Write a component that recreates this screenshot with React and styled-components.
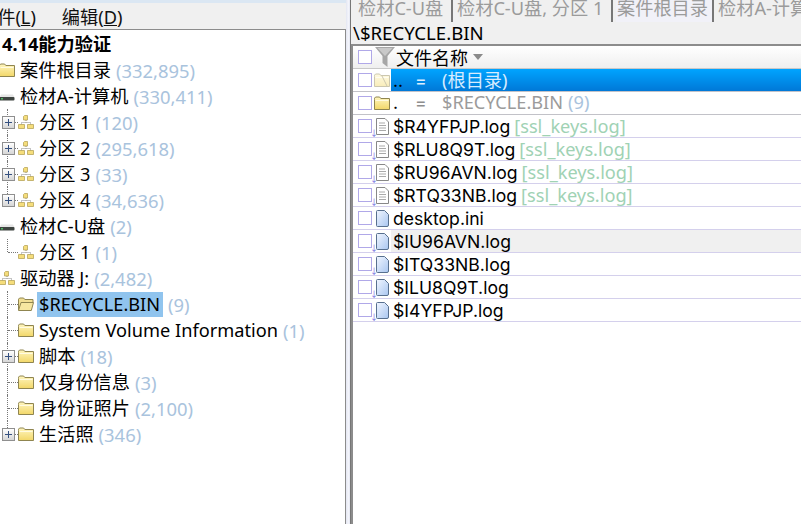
import styled, { createGlobalStyle } from "styled-components";

const GlobalStyle = createGlobalStyle`
  html, body, #root {
    margin: 0;
    height: 100%;
  }
  body {
    overflow: hidden;
    background: #f0f0f0;
    color: #000;
    font-family: "Noto Sans", "Noto Sans CJK SC", sans-serif;
    font-size: 18.2px;
  }
`;

const treeRows = [
  { depth: 0, label: "4.14能力验证", bold: true },
  { depth: 1, label: "案件根目录", count: "(332,895)", icon: "folder" },
  { depth: 1, label: "检材A-计算机", count: "(330,411)", icon: "drive" },
  { depth: 2, label: "分区 1", count: "(120)", icon: "volume", plus: true, guide: "first" },
  { depth: 2, label: "分区 2", count: "(295,618)", icon: "volume", plus: true, guide: "mid" },
  { depth: 2, label: "分区 3", count: "(33)", icon: "volume", plus: true, guide: "mid" },
  { depth: 2, label: "分区 4", count: "(34,636)", icon: "volume", plus: true, guide: "last" },
  { depth: 1, label: "检材C-U盘", count: "(2)", icon: "drive" },
  { depth: 2, label: "分区 1", count: "(1)", icon: "volume", guide: "last" },
  { depth: 1, label: "驱动器 J:", count: "(2,482)", icon: "volume" },
  { depth: 2, label: "$RECYCLE.BIN", count: "(9)", icon: "open", guide: "mid", selected: true },
  { depth: 2, label: "System Volume Information", count: "(1)", icon: "folder", guide: "mid" },
  { depth: 2, label: "脚本", count: "(18)", icon: "folder", plus: true, guide: "mid" },
  { depth: 2, label: "仅身份信息", count: "(3)", icon: "folder", guide: "mid" },
  { depth: 2, label: "身份证照片", count: "(2,100)", icon: "folder", guide: "mid" },
  { depth: 2, label: "生活照", count: "(346)", icon: "folder", plus: true, guide: "last" },
];

const fileRows = [
  { name: "..", alias: "(根目录)", icon: "faded", selected: true, dir: true },
  { name: ".", alias: "$RECYCLE.BIN", count: "(9)", icon: "folder", dir: true, raised: true },
  { name: "$R4YFPJP.log", tag: "[ssl_keys.log]", icon: "text", deleted: true },
  { name: "$RLU8Q9T.log", tag: "[ssl_keys.log]", icon: "text", deleted: true },
  { name: "$RU96AVN.log", tag: "[ssl_keys.log]", icon: "text", deleted: true },
  { name: "$RTQ33NB.log", tag: "[ssl_keys.log]", icon: "text", deleted: true },
  { name: "desktop.ini", icon: "blue" },
  { name: "$IU96AVN.log", icon: "blue", deleted: true, hover: true },
  { name: "$ITQ33NB.log", icon: "blue", deleted: true },
  { name: "$ILU8Q9T.log", icon: "blue", deleted: true },
  { name: "$I4YFPJP.log", icon: "blue", deleted: true },
];

const tabs = [
  { label: "检材C-U盘", width: 96 },
  { label: "检材C-U盘, 分区 1", width: 157 },
  { label: "案件根目录", width: 98, active: true },
  { label: "检材A-计算机", width: 120, open: true },
];

const FolderIcon = ({ faded }) => (
  <svg width="16" height="14" viewBox="0 0 16 14" style={{ opacity: faded ? 0.45 : 1 }}>
    <defs>
      <linearGradient id="folderFill" x1="0" y1="0" x2="0" y2="1">
        <stop offset="0" stopColor="#fff6c0" />
        <stop offset="1" stopColor="#f2d768" />
      </linearGradient>
    </defs>
    <path d="M.5 3.500V2.200L1.600 1h4l1.200 1.500h8.700v11H.5z" fill="url(#folderFill)" stroke="#8f8550" />
    <path d="M1.500 4.500h13" stroke="#fffbe2" />
    {faded && <path d="M8 3l5 10" stroke="#8f8550" />}
  </svg>
);

const OpenFolderIcon = () => (
  <svg width="16" height="14" viewBox="0 0 16 14">
    <path d="M.5 13V2.200L1.600 1h4l1.200 1.500h8.200v3" fill="#f2df93" stroke="#8f8550" />
    <path d="M.5 13.500l2.500-8h12.500l-2.200 8z" fill="#f7e7a0" stroke="#8f8550" />
  </svg>
);

const DriveIcon = () => (
  <svg width="16" height="14" viewBox="0 0 16 14">
    <path d="M2 5.500h12l1.500 3H.5z" fill="#e6e6e6" />
    <rect x="0.500" y="8" width="15" height="3.600" rx="1" fill="#3f4441" />
    <rect x="2" y="9.200" width="2" height="1.200" fill="#56d66d" />
  </svg>
);

const VolumeIcon = () => (
  <svg width="16" height="14" viewBox="0 0 16 14">
    <path d="M8 5v2.500M3.500 9.500V7.500h9v2" fill="none" stroke="#888" strokeDasharray="1 1" />
    <path d="M5.500 1.500L6.500.5h3v4.500h-4z" fill="#f5dd7b" stroke="#b7a55a" strokeWidth=".8" />
    <path d="M.5 9.500h6v4h-6zM9.500 9.500h6v4h-6z" fill="#f5dd7b" stroke="#b7a55a" strokeWidth=".8" />
  </svg>
);

const TextFileIcon = () => (
  <svg width="13" height="17" viewBox="0 0 13 17">
    <path d="M.5.5h8.500l3.500 3.500v12.500H.5z" fill="#fff" stroke="#888" />
    <path d="M3 5h6M3 7.500h7M3 10h7M3 12.500h7" stroke="#aaa" />
  </svg>
);

const BlueFileIcon = () => (
  <svg width="13" height="17" viewBox="0 0 13 17">
    <defs>
      <linearGradient id="blueFill" x1="0" y1="0" x2="1" y2="1">
        <stop offset="0" stopColor="#f1f6ff" />
        <stop offset="1" stopColor="#a9c6f0" />
      </linearGradient>
    </defs>
    <path d="M1.500.5h7l4 4v10.500a1.500 1.500 0 0 1-1.500 1.500h-9.500a1 1 0 0 1-1-1V1.500a1 1 0 0 1 1-1z" fill="url(#blueFill)" stroke="#58708f" />
  </svg>
);

const FunnelIcon = () => (
  <svg width="20" height="22" viewBox="0 0 20 22">
    <path d="M0 1h20L12.500 10v11L7.500 17v-7z" fill="#a6a6a6" />
    <path d="M2.500 2h15L10 10z" fill="#c9c9c9" />
  </svg>
);

const treeIcons = {
  folder: <FolderIcon />,
  open: <OpenFolderIcon />,
  drive: <DriveIcon />,
  volume: <VolumeIcon />,
};

const fileIcons = {
  faded: <FolderIcon faded />,
  folder: <FolderIcon />,
  text: <TextFileIcon />,
  blue: <BlueFileIcon />,
};

export default function App() {
  return (
    <>
      <GlobalStyle />
      <Page>
        <LeftColumn>
          <MenuBar>
            <MenuItem>
              文件(<u>L</u>)
            </MenuItem>
            <MenuItem>
              编辑(<u>D</u>)
            </MenuItem>
          </MenuBar>
          <TreePanel>
            {treeRows.map((row, i) => (
              <TreeRow key={i} $depth={row.depth}>
                {row.guide && (
                  <Guide $kind={row.guide}>{row.plus && <Expander />}</Guide>
                )}
                {row.icon && <TreeIcon>{treeIcons[row.icon]}</TreeIcon>}
                <TreeLabel $bold={row.bold} $selected={row.selected}>
                  {row.label}
                </TreeLabel>
                {row.count && <TreeCount>{row.count}</TreeCount>}
              </TreeRow>
            ))}
          </TreePanel>
        </LeftColumn>
        <Splitter />
        <RightColumn>
          <TabStrip>
            {tabs.map((tab) => (
              <Tab key={tab.label} $width={tab.width} $active={tab.active} $open={tab.open}>
                {tab.label}
              </Tab>
            ))}
          </TabStrip>
          <PathBar>\$RECYCLE.BIN</PathBar>
          <ListPanel>
            <ListHeader>
              <CheckBox />
              <FunnelIcon />
              <HeaderTitle>文件名称</HeaderTitle>
              <SortCaret />
            </ListHeader>
            {fileRows.map((file) => (
              <FileRow key={file.name} $dir={file.dir}>
                <CheckCell>
                  <CheckBox />
                  {file.deleted && <DeletedMark>↓</DeletedMark>}
                </CheckCell>
                <FileIcon $dir={file.dir}>{fileIcons[file.icon]}</FileIcon>
                <FileName $selected={file.selected} $hover={file.hover} $raised={file.raised}>
                  {file.dir ? (
                    <>
                      <DotName>{file.name}</DotName>
                      <Equals $selected={file.selected}>=</Equals>
                      <Alias $selected={file.selected}>{file.alias}</Alias>
                      {file.count && <AliasCount>{file.count}</AliasCount>}
                    </>
                  ) : (
                    <>
                      {file.name}
                      {file.tag && <Tag>{file.tag}</Tag>}
                    </>
                  )}
                </FileName>
              </FileRow>
            ))}
          </ListPanel>
        </RightColumn>
      </Page>
    </>
  );
}

const Page = styled.div`
  display: flex;
  height: 524px;
  width: 801px;
  overflow: hidden;
  white-space: nowrap;
`;

const LeftColumn = styled.div`
  width: 346px;
  flex: none;
  display: flex;
  flex-direction: column;
  border-top: 3px solid #dbe7f3;
  box-sizing: border-box;
`;

const MenuBar = styled.div`
  height: 26px;
  flex: none;
  display: flex;
  align-items: center;
  gap: 26px;
  margin-left: -21px;
`;

const MenuItem = styled.span`
  color: #111;
`;

const TreePanel = styled.div`
  flex: 1;
  overflow: hidden;
  background: #fff;
  border-top: 1px solid #8c8c8c;
  border-right: 1px solid #8c8c8c;
  padding-top: 1px;
`;

const TreeRow = styled.div`
  height: 26px;
  display: flex;
  align-items: center;
  margin-left: ${({ $depth }) => ($depth === 1 ? -1 : 0)}px;
`;

const Guide = styled.span`
  position: relative;
  width: 18px;
  height: 26px;
  flex: none;

  &::before {
    content: "";
    position: absolute;
    left: 7px;
    top: 0;
    height: ${({ $kind }) => ($kind === "last" ? "13px" : "26px")};
    border-left: 1px dotted #777;
  }
  &::after {
    content: "";
    position: absolute;
    left: 8px;
    top: 13px;
    width: 10px;
    border-top: 1px dotted #777;
  }
`;

const Expander = styled.span`
  position: absolute;
  z-index: 1;
  left: 2px;
  top: 7px;
  width: 11px;
  height: 11px;
  border: 1px solid #8f8f8f;
  background:
    linear-gradient(#35507f, #35507f) center / 7px 1px no-repeat,
    linear-gradient(#35507f, #35507f) center / 1px 7px no-repeat,
    linear-gradient(#fff, #d6d6d6);
`;

const TreeIcon = styled.span`
  width: 16px;
  height: 14px;
  flex: none;
  display: flex;
`;

const TreeLabel = styled.span`
  margin-left: ${({ $bold }) => ($bold ? 0 : 3)}px;
  padding-left: 2px;
  padding-right: ${({ $selected }) => ($selected ? 3 : 0)}px;
  line-height: 25px;
  font-weight: ${({ $bold }) => ($bold ? 700 : 400)};
  background: ${({ $selected }) => ($selected ? "#90c4ee" : "transparent")};
`;

const TreeCount = styled.span`
  margin-left: 5px;
  color: #a9c3dd;
  font-family: "Noto Sans", sans-serif;
  font-size: 18.4px;
`;

const Splitter = styled.div`
  width: 5px;
  flex: none;
  background: linear-gradient(90deg, #e3e6f2, #f4f5fb 60%, #e3e6f2);
  border-right: 1px solid #777;
  box-sizing: border-box;
`;

const RightColumn = styled.div`
  flex: 1;
  min-width: 0;
  display: flex;
  flex-direction: column;
`;

const TabStrip = styled.div`
  height: 22px;
  flex: none;
  display: flex;
  gap: 3px;
  overflow: hidden;
  padding-left: 6px;
`;

const Tab = styled.span`
  width: ${({ $width }) => $width}px;
  flex: none;
  box-sizing: border-box;
  padding-left: 1px;
  line-height: 17px;
  color: #9b9b9b;
  overflow: hidden;
  border-right: ${({ $open }) => ($open ? "none" : "2px solid #777")};
  background: ${({ $active }) => ($active ? "#f1f1f8" : "transparent")};
`;

const PathBar = styled.div`
  height: 22px;
  flex: none;
  line-height: 21px;
  padding-left: 2px;
  font-size: 18.6px;
`;

const ListPanel = styled.div`
  flex: 1;
  background: #fff;
  border-top: 2px solid #8c8c8c;
  border-left: 2px solid #8c8c8c;
`;

const ListHeader = styled.div`
  height: 22px;
  display: flex;
  align-items: center;
  padding-left: 5px;
  background: linear-gradient(#fff, #efefef);
  border-bottom: 1px solid #c8c8c8;
`;

const CheckBox = styled.span`
  width: 12px;
  height: 12px;
  flex: none;
  border: 1px solid #b0a8e8;
  background: #fff;
  margin-right: 3px;
`;

const HeaderTitle = styled.span`
  margin-left: 1px;
  font-size: 18px;
`;

const SortCaret = styled.span`
  margin-left: 5px;
  border-top: 6px solid #8a8a8a;
  border-left: 5px solid transparent;
  border-right: 5px solid transparent;
`;

const FileRow = styled.div`
  height: 22px;
  display: flex;
  align-items: center;
  border-bottom: 1px solid ${({ $dir }) => ($dir ? "#c2c2c8" : "#d4d0ec")};
`;

const CheckCell = styled.span`
  position: relative;
  width: 20px;
  height: 22px;
  flex: none;
  display: flex;
  align-items: center;
  padding-left: 5px;
  box-sizing: border-box;
`;

const DeletedMark = styled.span`
  position: absolute;
  left: 17px;
  bottom: 0;
  font-size: 8px;
  line-height: 8px;
  color: #6a5fe0;
`;

const FileIcon = styled.span`
  width: 18px;
  flex: none;
  display: flex;
  justify-content: center;
  padding-left: ${({ $dir }) => ($dir ? 0 : 1)}px;
  box-sizing: border-box;
`;

const FileName = styled.span`
  flex: 1;
  height: 22px;
  line-height: ${({ $raised }) => ($raised ? 20 : 23)}px;
  padding-left: 2px;
  font-family: "Inter", "Noto Sans CJK SC", sans-serif;
  font-size: 17.6px;
  background: ${({ $selected, $hover }) =>
    $selected ? "linear-gradient(#00a4ff, #0078d7)" : $hover ? "#f0f0f0" : "transparent"};
`;

const DotName = styled.span`
  display: inline-block;
  width: 22px;
`;

const Equals = styled.span`
  display: inline-block;
  width: 27px;
  color: ${({ $selected }) => ($selected ? "#dbeeff" : "#8e8e8e")};
`;

const Alias = styled.span`
  font-family: "Noto Sans", "Noto Sans CJK SC", sans-serif;
  font-size: 18.2px;
  color: ${({ $selected }) => ($selected ? "#d7ecff" : "#9b9b9b")};
`;

const AliasCount = styled.span`
  margin-left: 5px;
  color: #a9c3dd;
  font-family: "Noto Sans", sans-serif;
  font-size: 18.2px;
`;

const Tag = styled.span`
  margin-left: 4px;
  font-family: "Noto Sans", sans-serif;
  font-size: 18.2px;
  color: #a0d2b4;
`;
